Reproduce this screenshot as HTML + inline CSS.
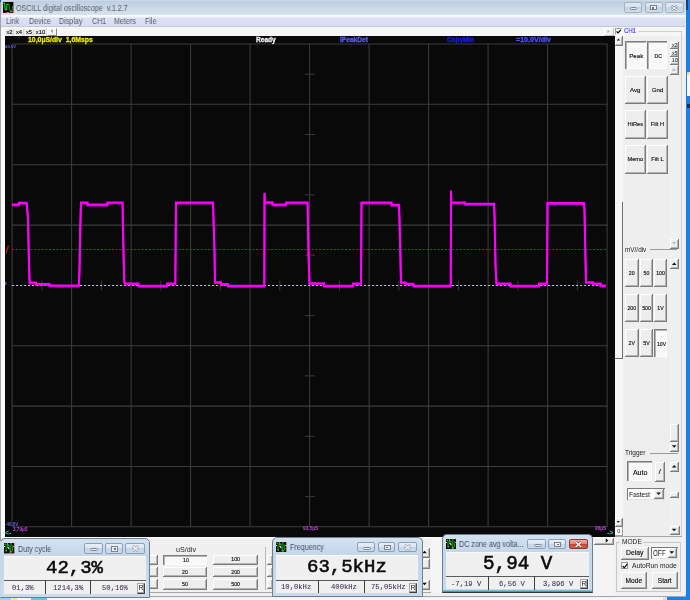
<!DOCTYPE html>
<html><head><meta charset="utf-8"><style>
*{margin:0;padding:0;box-sizing:border-box}
html,body{width:690px;height:600px;overflow:hidden;background:#1c7fe4;position:relative}
div{position:absolute}
.t{white-space:pre;will-change:transform}
.c{white-space:pre;text-align:center;will-change:transform}
</style></head><body>
<div style="left:0px;top:0px;width:686px;height:596px;background:#e4ecf5;border-left:1px solid #9aa4ae;border-bottom:1px solid #a0a4aa;"></div><div style="left:0px;top:596px;width:667px;height:4px;background:#f6f7f8;"></div><div style="left:663px;top:596px;width:4px;height:4px;background:#cfe0f0;"></div><div style="left:0px;top:598px;width:11px;height:2px;background:#8fd8f0;"></div><div style="left:11.5px;top:598px;width:5.5px;height:2px;background:#f0e890;"></div><div style="left:31px;top:598px;width:16px;height:2px;background:#60c8e8;"></div><div style="left:0px;top:0px;width:1px;height:2px;background:#2050a0;"></div><div style="left:687px;top:71.5px;width:3px;height:24px;background:#f6f8fa;"></div><div style="left:687px;top:72px;width:2px;height:3px;background:#f0d070;"></div><div style="left:687px;top:104px;width:3px;height:4px;background:#203048;"></div><div style="left:1px;top:0px;width:685px;height:15px;background:linear-gradient(#d8dfe6 0,#bfcfdf 8%,#c9d8e6 50%,#d6e3ef 100%);"></div><div style="left:1px;top:15px;width:684px;height:12px;background:linear-gradient(#ffffff 0,#f4f6fc 15%,#dde1f2 30%,#d9ddf1 100%);border-bottom:1px solid #c6cad6;"></div><div style="left:1px;top:27px;width:684px;height:569px;background:#f0f0f0;"></div><div style="left:1px;top:27px;width:684px;height:9px;background:#f6f6f6;"></div><div style="left:1px;top:36px;width:4px;height:501px;background:#fafafa;"></div><svg style="position:absolute;left:3px;top:2px" width="10.5" height="11" viewBox="0 0 10.5 11"><rect x="0" y="0" width="10.5" height="11" fill="#5a1010"/><rect x="0" y="0" width="9.8" height="10.2" fill="#020202"/><path d="M0.6 1.4 H1.6 L2.2 7.6 H3.6 L3.9 2.4 H6" stroke="#10e010" stroke-width="1.1" fill="none"/><path d="M6 2.4 L7 9.3 H9 L9.6 4.8" stroke="#089008" stroke-width="1.1" fill="none"/><circle cx="8.3" cy="9.4" r="0.9" fill="#10e010"/><circle cx="2.8" cy="7.6" r="0.8" fill="#10e010"/><circle cx="1.2" cy="1.4" r="0.8" fill="#10e010"/><circle cx="9.6" cy="5" r="0.7" fill="#10c010"/><rect x="3.5" y="10.2" width="2.5" height="0.8" fill="#e070d0"/></svg><div class="t" style="left:16px;top:4.7px;font:normal 8.2px/8.2px 'Liberation Sans',sans-serif;color:#555a6a;transform:scaleX(0.873);transform-origin:0 0">OSCILL digital oscilloscope  v.1.2.7</div><div style="left:623.7px;top:2.3px;width:18.799999999999955px;height:10.3px;background:linear-gradient(#e2eaf3 0,#d6e1ec 45%,#c6d4e3 50%,#cfdbe8 100%);border:1px solid #a4b4c8;border-radius:2px;"></div><div style="left:644.6px;top:2.3px;width:18.299999999999955px;height:10.3px;background:linear-gradient(#e2eaf3 0,#d6e1ec 45%,#c6d4e3 50%,#cfdbe8 100%);border:1px solid #a4b4c8;border-radius:2px;"></div><div style="left:664.5px;top:2.3px;width:19.299999999999955px;height:10.3px;background:linear-gradient(#e2eaf3 0,#d6e1ec 45%,#c6d4e3 50%,#cfdbe8 100%);border:1px solid #a4b4c8;border-radius:2px;"></div><div style="left:629.5px;top:6.8px;width:7.3px;height:3.6px;background:#eef1f4;border:1px solid #7a828e;border-radius:1.5px;"></div><div style="left:649.8px;top:5.2px;width:6.8px;height:5.2px;border:1px solid #7a828e;background:#eef1f4;"></div><div style="left:652.2px;top:7px;width:2px;height:1.5px;background:#6a7280;"></div><svg style="position:absolute;left:670px;top:4.5px" width="8.5" height="6.2" viewBox="0 0 8.5 6.2"><path d="M1.4 0.9 L7.1 5.3 M7.1 0.9 L1.4 5.3" stroke="#7a828e" stroke-width="2.4"/><path d="M1.4 0.9 L7.1 5.3 M7.1 0.9 L1.4 5.3" stroke="#f0f2f4" stroke-width="1.1"/></svg><div style="left:686px;top:0px;width:2px;height:10px;background:#1a3a78;"></div><div class="t" style="left:6px;top:18px;font:normal 8.2px/8.2px 'Liberation Sans',sans-serif;color:#5a5a6a;transform:scaleX(0.87);transform-origin:0 0">Link</div><div class="t" style="left:28.7px;top:18px;font:normal 8.2px/8.2px 'Liberation Sans',sans-serif;color:#5a5a6a;transform:scaleX(0.87);transform-origin:0 0">Device</div><div class="t" style="left:59px;top:18px;font:normal 8.2px/8.2px 'Liberation Sans',sans-serif;color:#5a5a6a;transform:scaleX(0.87);transform-origin:0 0">Display</div><div class="t" style="left:91.5px;top:18px;font:normal 8.2px/8.2px 'Liberation Sans',sans-serif;color:#5a5a6a;transform:scaleX(0.87);transform-origin:0 0">CH1</div><div class="t" style="left:114.2px;top:18px;font:normal 8.2px/8.2px 'Liberation Sans',sans-serif;color:#5a5a6a;transform:scaleX(0.87);transform-origin:0 0">Meters</div><div class="t" style="left:145.2px;top:18px;font:normal 8.2px/8.2px 'Liberation Sans',sans-serif;color:#5a5a6a;transform:scaleX(0.87);transform-origin:0 0">File</div><div style="left:5px;top:27.5px;width:9px;height:8px;background:#ececec;border-right:1px solid #d8d8d8;border-top:1px solid #fafafa;"></div><div class="c" style="left:5px;top:27.8px;width:9px;height:8px;font:normal 5.8px/8px 'Liberation Sans',sans-serif;color:#000;-webkit-text-stroke:0.1px #000">x2</div><div style="left:14px;top:27.5px;width:10px;height:8px;background:#ececec;border-right:1px solid #d8d8d8;border-top:1px solid #fafafa;"></div><div class="c" style="left:14px;top:27.8px;width:10px;height:8px;font:normal 5.8px/8px 'Liberation Sans',sans-serif;color:#000;-webkit-text-stroke:0.1px #000">x4</div><div style="left:24px;top:27.5px;width:10px;height:8px;background:#ececec;border-right:1px solid #d8d8d8;border-top:1px solid #fafafa;"></div><div class="c" style="left:24px;top:27.8px;width:10px;height:8px;font:normal 5.8px/8px 'Liberation Sans',sans-serif;color:#000;-webkit-text-stroke:0.1px #000">x5</div><div style="left:34px;top:27.5px;width:13px;height:8px;background:#ececec;border-right:1px solid #d8d8d8;border-top:1px solid #fafafa;"></div><div class="c" style="left:34px;top:27.8px;width:13px;height:8px;font:normal 5.8px/8px 'Liberation Sans',sans-serif;color:#000;-webkit-text-stroke:0.1px #000">x10</div><div style="left:47px;top:27.5px;width:9.5px;height:8.2px;background:#f4f4f4;border:1px solid #8a8a8a;border-top-color:#fff;border-left-color:#fff;"></div><svg style="position:absolute;left:0;top:0" width="690" height="600"><polygon points="52.75,29.30 52.75,32.90 50.75,31.10" fill="#888"/></svg><div style="left:4.5px;top:36px;width:611px;height:501px;background:#090909;"></div><div style="left:1px;top:537px;width:614px;height:61px;background:#f0f0f0;border-top:1px solid #ffffff;"></div><svg style="position:absolute;left:0;top:0" width="690" height="600" viewBox="0 0 690 600"><line x1="12.1" y1="44" x2="12.1" y2="526.8" stroke="#3c3c3c" stroke-width="1.05"/><line x1="71.6" y1="44" x2="71.6" y2="526.8" stroke="#3c3c3c" stroke-width="1.05"/><line x1="131.1" y1="44" x2="131.1" y2="526.8" stroke="#3c3c3c" stroke-width="1.05"/><line x1="190.6" y1="44" x2="190.6" y2="526.8" stroke="#3c3c3c" stroke-width="1.05"/><line x1="250.1" y1="44" x2="250.1" y2="526.8" stroke="#3c3c3c" stroke-width="1.05"/><line x1="309.6" y1="44" x2="309.6" y2="526.8" stroke="#3c3c3c" stroke-width="1.05"/><line x1="369.1" y1="44" x2="369.1" y2="526.8" stroke="#3c3c3c" stroke-width="1.05"/><line x1="428.6" y1="44" x2="428.6" y2="526.8" stroke="#3c3c3c" stroke-width="1.05"/><line x1="488.1" y1="44" x2="488.1" y2="526.8" stroke="#3c3c3c" stroke-width="1.05"/><line x1="547.6" y1="44" x2="547.6" y2="526.8" stroke="#3c3c3c" stroke-width="1.05"/><line x1="607.1" y1="44" x2="607.1" y2="526.8" stroke="#3c3c3c" stroke-width="1.05"/><line x1="12" y1="44.0" x2="607.5" y2="44.0" stroke="#3c3c3c" stroke-width="1.05"/><line x1="12" y1="104.3" x2="607.5" y2="104.3" stroke="#3c3c3c" stroke-width="1.05"/><line x1="12" y1="164.7" x2="607.5" y2="164.7" stroke="#3c3c3c" stroke-width="1.05"/><line x1="12" y1="225.1" x2="607.5" y2="225.1" stroke="#3c3c3c" stroke-width="1.05"/><line x1="12" y1="345.8" x2="607.5" y2="345.8" stroke="#3c3c3c" stroke-width="1.05"/><line x1="12" y1="406.1" x2="607.5" y2="406.1" stroke="#3c3c3c" stroke-width="1.05"/><line x1="12" y1="466.4" x2="607.5" y2="466.4" stroke="#3c3c3c" stroke-width="1.05"/><line x1="12" y1="526.8" x2="607.5" y2="526.8" stroke="#3c3c3c" stroke-width="1.05"/><line x1="305" y1="74.2" x2="315" y2="74.2" stroke="#3a3a3a" stroke-width="1"/><line x1="305" y1="134.5" x2="315" y2="134.5" stroke="#3a3a3a" stroke-width="1"/><line x1="305" y1="194.9" x2="315" y2="194.9" stroke="#3a3a3a" stroke-width="1"/><line x1="305" y1="255.2" x2="315" y2="255.2" stroke="#3a3a3a" stroke-width="1"/><line x1="305" y1="315.6" x2="315" y2="315.6" stroke="#3a3a3a" stroke-width="1"/><line x1="305" y1="375.9" x2="315" y2="375.9" stroke="#3a3a3a" stroke-width="1"/><line x1="305" y1="436.3" x2="315" y2="436.3" stroke="#3a3a3a" stroke-width="1"/><line x1="305" y1="496.6" x2="315" y2="496.6" stroke="#3a3a3a" stroke-width="1"/><line x1="41.8" y1="280.5" x2="41.8" y2="290.5" stroke="#3a3a3a" stroke-width="1"/><line x1="101.3" y1="280.5" x2="101.3" y2="290.5" stroke="#3a3a3a" stroke-width="1"/><line x1="160.8" y1="280.5" x2="160.8" y2="290.5" stroke="#3a3a3a" stroke-width="1"/><line x1="220.3" y1="280.5" x2="220.3" y2="290.5" stroke="#3a3a3a" stroke-width="1"/><line x1="279.8" y1="280.5" x2="279.8" y2="290.5" stroke="#3a3a3a" stroke-width="1"/><line x1="339.4" y1="280.5" x2="339.4" y2="290.5" stroke="#3a3a3a" stroke-width="1"/><line x1="398.9" y1="280.5" x2="398.9" y2="290.5" stroke="#3a3a3a" stroke-width="1"/><line x1="458.4" y1="280.5" x2="458.4" y2="290.5" stroke="#3a3a3a" stroke-width="1"/><line x1="517.9" y1="280.5" x2="517.9" y2="290.5" stroke="#3a3a3a" stroke-width="1"/><line x1="577.4" y1="280.5" x2="577.4" y2="290.5" stroke="#3a3a3a" stroke-width="1"/><line x1="12" y1="249.5" x2="606" y2="249.5" stroke="#c41212" stroke-width="1.1" stroke-dasharray="2.1 1.6"/><line x1="12" y1="285.5" x2="606" y2="285.5" stroke="#b4bcd8" stroke-width="1.1" stroke-dasharray="2.2 1.8"/><path d="M12,204.5 H19 V202.8 H26.6 L28,218 L28.6,244 L29.2,270 L29.6,282.5 H36 V284 H49.5 V285.6 H78.8 L79.5,270 L80.2,230 L81,202.5 H87.5 V204.6 H107.5 V202.4 H122.6 L123,230 L124.2,281 L125,283.5 H138.5 V285.8 H167 V283.6 H175.3 L176,202.5 H213 L214.5,250 L215,282.2 H221 V284 H228 V285.8 H264.3 L264.5,192.7 L265,202.3 H272.5 V204.6 H286 V202.5 H307.6 L308.4,250 L309.5,283.3 H324 V285.8 H353 V283.6 H361 L361.5,202.5 H391.5 V204.8 H399 L399.5,220 L400.3,250 L401,282.4 H405.5 V283.8 H413.5 V285.8 H450.8 L451,190.4 L451.3,202.5 H465 V203.8 H494 L494.6,217 L495.5,265 L496.5,283.5 H510.5 V285.8 H539 V283.6 H547 L547.5,203 H584 L584.5,210 L585.3,250 L586,282.2 H593 V283.6 H600.5 V285.6 H606" stroke="#ff00ff" stroke-width="2" fill="none" stroke-linejoin="miter" transform="translate(0,0.9)" stroke-opacity="0.75"/><path d="M12,204.5 H19 V202.8 H26.6 L28,218 L28.6,244 L29.2,270 L29.6,282.5 H36 V284 H49.5 V285.6 H78.8 L79.5,270 L80.2,230 L81,202.5 H87.5 V204.6 H107.5 V202.4 H122.6 L123,230 L124.2,281 L125,283.5 H138.5 V285.8 H167 V283.6 H175.3 L176,202.5 H213 L214.5,250 L215,282.2 H221 V284 H228 V285.8 H264.3 L264.5,192.7 L265,202.3 H272.5 V204.6 H286 V202.5 H307.6 L308.4,250 L309.5,283.3 H324 V285.8 H353 V283.6 H361 L361.5,202.5 H391.5 V204.8 H399 L399.5,220 L400.3,250 L401,282.4 H405.5 V283.8 H413.5 V285.8 H450.8 L451,190.4 L451.3,202.5 H465 V203.8 H494 L494.6,217 L495.5,265 L496.5,283.5 H510.5 V285.8 H539 V283.6 H547 L547.5,203 H584 L584.5,210 L585.3,250 L586,282.2 H593 V283.6 H600.5 V285.6 H606" stroke="#ff00ff" stroke-width="2" fill="none" stroke-linejoin="miter"/><line x1="6" y1="253.5" x2="8.5" y2="245.5" stroke="#c01818" stroke-width="1.2"/><rect x="5" y="282" width="1.5" height="3" fill="#5050c0"/></svg><div class="t" style="left:27.5px;top:37px;font:bold 6.9px/6.9px 'Liberation Sans',sans-serif;color:#e8e800;-webkit-text-stroke:0.3px currentColor">10,0µS/div  1,6Msps</div><div class="t" style="left:256px;top:37.2px;font:bold 6.6px/6.6px 'Liberation Sans',sans-serif;color:#f0f0f8;-webkit-text-stroke:0.3px currentColor">Ready</div><div class="t" style="left:340px;top:37.2px;font:bold 6.6px/6.6px 'Liberation Sans',sans-serif;color:#5a5aff;-webkit-text-stroke:0.3px currentColor">iPeakDet</div><div class="t" style="left:447px;top:37px;font:bold 6.4px/6.4px 'Liberation Sans',sans-serif;color:#1a1aff;-webkit-text-stroke:0.3px currentColor">CopyMin</div><div class="t" style="left:516.4px;top:37px;font:bold 7.1px/7.1px 'Liberation Sans',sans-serif;color:#5050ff;-webkit-text-stroke:0.3px currentColor">=10.0V/div</div><div class="t" style="left:5px;top:44.8px;font:bold 4.3px/4.3px 'Liberation Sans',sans-serif;color:#6060e0;">40,0V</div><div class="t" style="left:5px;top:522.5px;font:bold 4.5px/4.5px 'Liberation Sans',sans-serif;color:#6060e0;">-40,0V</div><div class="t" style="left:13px;top:527.5px;font:bold 4.6px/4.6px 'Liberation Sans',sans-serif;color:#c040e0;">3,79µS</div><div class="t" style="left:4.8px;top:529.2px;font:bold 7px/7px 'Liberation Sans',sans-serif;color:#40c0c8;">&lt;-</div><div class="t" style="left:302.8px;top:526.5px;font:bold 4.8px/4.8px 'Liberation Sans',sans-serif;color:#c040e0;">93,5µS</div><div class="t" style="left:594.8px;top:526.5px;font:bold 4.8px/4.8px 'Liberation Sans',sans-serif;color:#c040e0;">96µS</div><div class="t" style="left:606.5px;top:529.2px;font:bold 7px/7px 'Liberation Sans',sans-serif;color:#40c0c8;">-&gt;</div><div style="left:604px;top:28px;width:10px;height:8px;background:#f4f4f4;border:1px solid #c0c0c0;border-top-color:#fff;border-left-color:#fff;"></div><svg style="position:absolute;left:0;top:0" width="690" height="600"><polygon points="607.50,29.70 607.50,33.30 609.50,31.50" fill="#aaa"/></svg><div style="left:615.3px;top:27.9px;width:6.4px;height:6.4px;background:#fafafa;border-left:1px solid #a0a0a0;border-top:1px solid #a0a0a0;"></div><svg style="position:absolute;left:616.2px;top:28.6px" width="5.5" height="5" viewBox="0 0 5.5 5"><path d="M0.6 2.4 L2 3.9 L4.9 0.8" stroke="#000" stroke-width="1.2" fill="none"/></svg><div class="t" style="left:624.3px;top:27.2px;font:normal 7.7px/7.7px 'Liberation Sans',sans-serif;color:#2a2aff;transform:scaleX(0.78);transform-origin:0 0;-webkit-text-stroke:0.12px #2a2aff">CH1</div><div style="left:638px;top:31px;width:44px;height:1px;background:#d0d0d0;"></div><div style="left:681px;top:31px;width:1px;height:506px;background:#d0d0d0;"></div><div style="left:615px;top:36px;width:8px;height:501px;background:#f6f6f6;"></div><div style="left:615px;top:36px;width:7.5px;height:9.5px;background:#eeeeee;box-shadow:inset -1px -1px #7c7c7c,inset 1px 1px #ffffff,inset -2px -2px #b4b4b4;"></div><svg style="position:absolute;left:0;top:0" width="690" height="600"><polygon points="616.70,40.60 620.10,40.60 618.40,38.80" fill="#111"/></svg><div style="left:622px;top:202px;width:1px;height:157px;background:#707070;"></div><div style="left:615px;top:358px;width:8px;height:1px;background:#707070;"></div><div style="left:615px;top:517.8px;width:7.5px;height:9.2px;background:#eeeeee;box-shadow:inset -1px -1px #7c7c7c,inset 1px 1px #ffffff,inset -2px -2px #b4b4b4;"></div><svg style="position:absolute;left:0;top:0" width="690" height="600"><polygon points="616.55,521.00 619.95,521.00 618.25,522.80" fill="#111"/></svg><div style="left:615px;top:536px;width:67px;height:1px;background:#a8a8a8;"></div><div style="left:615px;top:527px;width:7.5px;height:8.5px;background:#fafafa;box-shadow:inset -1px -1px #a0a0a0;"></div><div class="c" style="left:615px;top:527px;width:7.5px;height:8.5px;font:normal 5.5px/8.5px 'Liberation Sans',sans-serif;color:#222;">0</div><div style="left:624px;top:36px;width:46px;height:500px;background:#eeeeee;"></div><div style="left:625px;top:41px;width:20.5px;height:27.6px;background:#f8f8f8;box-shadow:inset 1px 1px #7c7c7c,inset 2px 2px #b4b4b4,inset -1px -1px #ffffff;"></div><div class="c" style="left:626px;top:42px;width:20.5px;height:27.6px;font:normal 6.1px/27.6px 'Liberation Sans',sans-serif;color:#111;-webkit-text-stroke:0.15px #111">Peak</div><div style="left:646.6px;top:41px;width:20.3px;height:27.6px;background:#f8f8f8;box-shadow:inset 1px 1px #7c7c7c,inset 2px 2px #b4b4b4,inset -1px -1px #ffffff;"></div><div class="c" style="left:647.6px;top:42.8px;width:20.3px;height:27.6px;font:normal 5.2px/27.6px 'Liberation Sans',sans-serif;color:#111;-webkit-text-stroke:0.15px #111">DC</div><div style="left:625px;top:75.6px;width:20.6px;height:28.6px;background:#eeeeee;box-shadow:inset -1px -1px #7c7c7c,inset 1px 1px #ffffff,inset -2px -2px #b4b4b4;"></div><div class="c" style="left:625px;top:75.6px;width:20.6px;height:28.6px;font:normal 6.1px/28.6px 'Liberation Sans',sans-serif;color:#111;-webkit-text-stroke:0.15px #111">Avg</div><div style="left:647px;top:75.6px;width:21px;height:28.6px;background:#eeeeee;box-shadow:inset -1px -1px #7c7c7c,inset 1px 1px #ffffff,inset -2px -2px #b4b4b4;"></div><div class="c" style="left:647px;top:75.6px;width:21px;height:28.6px;font:normal 6.1px/28.6px 'Liberation Sans',sans-serif;color:#111;-webkit-text-stroke:0.15px #111">Gnd</div><div style="left:625px;top:110.3px;width:20.6px;height:28.5px;background:#eeeeee;box-shadow:inset -1px -1px #7c7c7c,inset 1px 1px #ffffff,inset -2px -2px #b4b4b4;"></div><div class="c" style="left:625px;top:110.3px;width:20.6px;height:28.5px;font:normal 5.7px/28.5px 'Liberation Sans',sans-serif;color:#111;-webkit-text-stroke:0.15px #111">HiRes</div><div style="left:647px;top:110.3px;width:21px;height:28.5px;background:#eeeeee;box-shadow:inset -1px -1px #7c7c7c,inset 1px 1px #ffffff,inset -2px -2px #b4b4b4;"></div><div class="c" style="left:647px;top:110.3px;width:21px;height:28.5px;font:normal 5.7px/28.5px 'Liberation Sans',sans-serif;color:#111;-webkit-text-stroke:0.15px #111">Filt H</div><div style="left:625px;top:145.3px;width:20.6px;height:28.5px;background:#eeeeee;box-shadow:inset -1px -1px #7c7c7c,inset 1px 1px #ffffff,inset -2px -2px #b4b4b4;"></div><div class="c" style="left:625px;top:145.3px;width:20.6px;height:28.5px;font:normal 5.7px/28.5px 'Liberation Sans',sans-serif;color:#111;-webkit-text-stroke:0.15px #111">Memo</div><div style="left:647px;top:145.3px;width:21px;height:28.5px;background:#eeeeee;box-shadow:inset -1px -1px #7c7c7c,inset 1px 1px #ffffff,inset -2px -2px #b4b4b4;"></div><div class="c" style="left:647px;top:145.3px;width:21px;height:28.5px;font:normal 5.7px/28.5px 'Liberation Sans',sans-serif;color:#111;-webkit-text-stroke:0.15px #111">Filt L</div><div style="left:669.6px;top:41.75px;width:9.4px;height:7.0px;background:#eeeeee;box-shadow:inset -1px -1px #7c7c7c,inset 1px 1px #ffffff,inset -2px -2px #b4b4b4;"></div><div class="c" style="left:669.6px;top:41.75px;width:9.4px;height:7.0px;font:normal 5.2px/7.0px 'Liberation Sans',sans-serif;color:#111;">x2</div><div style="left:669.6px;top:49px;width:9.4px;height:8px;background:#eeeeee;box-shadow:inset -1px -1px #7c7c7c,inset 1px 1px #ffffff,inset -2px -2px #b4b4b4;"></div><div class="c" style="left:669.6px;top:49px;width:9.4px;height:8px;font:normal 5.2px/8px 'Liberation Sans',sans-serif;color:#111;">x5</div><div style="left:669.6px;top:57px;width:9.4px;height:7.5px;background:#eeeeee;box-shadow:inset -1px -1px #7c7c7c,inset 1px 1px #ffffff,inset -2px -2px #b4b4b4;"></div><div class="c" style="left:669.6px;top:57px;width:9.4px;height:7.5px;font:normal 5.2px/7.5px 'Liberation Sans',sans-serif;color:#111;">10</div><div style="left:669.6px;top:65px;width:9.4px;height:9.8px;background:#eeeeee;box-shadow:inset -1px -1px #7c7c7c,inset 1px 1px #ffffff,inset -2px -2px #b4b4b4;"></div><svg style="position:absolute;left:0;top:0" width="690" height="600"><polygon points="671.50,70.65 676.10,70.65 673.80,68.15" fill="#bbb"/></svg><div style="left:670px;top:238.75px;width:9.4px;height:9.75px;background:#eeeeee;box-shadow:inset -1px -1px #7c7c7c,inset 1px 1px #ffffff,inset -2px -2px #b4b4b4;"></div><svg style="position:absolute;left:0;top:0" width="690" height="600"><polygon points="671.90,241.88 676.50,241.88 674.20,244.38" fill="#bbb"/></svg><div style="left:670px;top:259px;width:9.4px;height:10.4px;background:#eeeeee;box-shadow:inset -1px -1px #7c7c7c,inset 1px 1px #ffffff,inset -2px -2px #b4b4b4;"></div><svg style="position:absolute;left:0;top:0" width="690" height="600"><polygon points="671.90,264.95 676.50,264.95 674.20,262.45" fill="#111"/></svg><div class="t" style="left:625px;top:247.2px;font:normal 6.4px/6.4px 'Liberation Sans',sans-serif;color:#222;">mV//div</div><div style="left:650px;top:249px;width:27px;height:1px;background:#9a9a9a;"></div><div style="left:625px;top:259px;width:13.5px;height:28px;background:#eeeeee;box-shadow:inset -1px -1px #7c7c7c,inset 1px 1px #ffffff,inset -2px -2px #b4b4b4;"></div><div class="c" style="left:625px;top:259px;width:13.5px;height:28px;font:normal 5.2px/28px 'Liberation Sans',sans-serif;color:#111;-webkit-text-stroke:0.15px #111">20</div><div style="left:639.5px;top:259px;width:13px;height:28px;background:#eeeeee;box-shadow:inset -1px -1px #7c7c7c,inset 1px 1px #ffffff,inset -2px -2px #b4b4b4;"></div><div class="c" style="left:639.5px;top:259px;width:13px;height:28px;font:normal 5.2px/28px 'Liberation Sans',sans-serif;color:#111;-webkit-text-stroke:0.15px #111">50</div><div style="left:654px;top:259px;width:13px;height:28px;background:#eeeeee;box-shadow:inset -1px -1px #7c7c7c,inset 1px 1px #ffffff,inset -2px -2px #b4b4b4;"></div><div class="c" style="left:654px;top:259px;width:13px;height:28px;font:normal 5.2px/28px 'Liberation Sans',sans-serif;color:#111;-webkit-text-stroke:0.15px #111">100</div><div style="left:625px;top:293.75px;width:13.5px;height:28.25px;background:#eeeeee;box-shadow:inset -1px -1px #7c7c7c,inset 1px 1px #ffffff,inset -2px -2px #b4b4b4;"></div><div class="c" style="left:625px;top:293.75px;width:13.5px;height:28.25px;font:normal 5.2px/28.25px 'Liberation Sans',sans-serif;color:#111;-webkit-text-stroke:0.15px #111">200</div><div style="left:639.5px;top:293.75px;width:13px;height:28.25px;background:#eeeeee;box-shadow:inset -1px -1px #7c7c7c,inset 1px 1px #ffffff,inset -2px -2px #b4b4b4;"></div><div class="c" style="left:639.5px;top:293.75px;width:13px;height:28.25px;font:normal 5.2px/28.25px 'Liberation Sans',sans-serif;color:#111;-webkit-text-stroke:0.15px #111">500</div><div style="left:654px;top:293.75px;width:13px;height:28.25px;background:#eeeeee;box-shadow:inset -1px -1px #7c7c7c,inset 1px 1px #ffffff,inset -2px -2px #b4b4b4;"></div><div class="c" style="left:654px;top:293.75px;width:13px;height:28.25px;font:normal 5.2px/28.25px 'Liberation Sans',sans-serif;color:#111;-webkit-text-stroke:0.15px #111">1V</div><div style="left:625px;top:328.75px;width:13.5px;height:28.2px;background:#eeeeee;box-shadow:inset -1px -1px #7c7c7c,inset 1px 1px #ffffff,inset -2px -2px #b4b4b4;"></div><div class="c" style="left:625px;top:328.75px;width:13.5px;height:28.2px;font:normal 5.2px/28.2px 'Liberation Sans',sans-serif;color:#111;-webkit-text-stroke:0.15px #111">2V</div><div style="left:639.5px;top:328.75px;width:13px;height:28.2px;background:#eeeeee;box-shadow:inset -1px -1px #7c7c7c,inset 1px 1px #ffffff,inset -2px -2px #b4b4b4;"></div><div class="c" style="left:639.5px;top:328.75px;width:13px;height:28.2px;font:normal 5.2px/28.2px 'Liberation Sans',sans-serif;color:#111;-webkit-text-stroke:0.15px #111">5V</div><div style="left:654px;top:328.75px;width:13px;height:28.2px;background:#f8f8f8;box-shadow:inset 1px 1px #7c7c7c,inset 2px 2px #b4b4b4,inset -1px -1px #ffffff;"></div><div class="c" style="left:655px;top:329.75px;width:13px;height:28.2px;font:normal 5.2px/28.2px 'Liberation Sans',sans-serif;color:#111;-webkit-text-stroke:0.15px #111">10V</div><div style="left:670px;top:423.75px;width:9.4px;height:18.5px;background:#eeeeee;box-shadow:inset -1px -1px #7c7c7c,inset 1px 1px #ffffff,inset -2px -2px #b4b4b4;"></div><div style="left:670px;top:442px;width:9.4px;height:10px;background:#eeeeee;box-shadow:inset -1px -1px #7c7c7c,inset 1px 1px #ffffff,inset -2px -2px #b4b4b4;"></div><svg style="position:absolute;left:0;top:0" width="690" height="600"><polygon points="671.90,445.25 676.50,445.25 674.20,447.75" fill="#111"/></svg><div class="t" style="left:625.2px;top:449.8px;font:normal 6.5px/6.5px 'Liberation Sans',sans-serif;color:#222;">Trigger</div><div style="left:650px;top:453px;width:28px;height:1px;background:#9a9a9a;"></div><div style="left:627.3px;top:461.2px;width:24.4px;height:20px;background:#f8f8f8;box-shadow:inset 1px 1px #7c7c7c,inset 2px 2px #b4b4b4,inset -1px -1px #ffffff;"></div><div class="c" style="left:628.3px;top:463.2px;width:24.4px;height:20px;font:normal 7.1px/20px 'Liberation Sans',sans-serif;color:#111;-webkit-text-stroke:0.15px #111">Auto</div><div style="left:655px;top:461.5px;width:9.8px;height:20.2px;background:#eeeeee;box-shadow:inset -1px -1px #7c7c7c,inset 1px 1px #ffffff,inset -2px -2px #b4b4b4;"></div><div class="c" style="left:655px;top:461.5px;width:9.8px;height:20.2px;font:normal 7.5px/20.2px 'Liberation Sans',sans-serif;color:#111;-webkit-text-stroke:0.15px #111">/</div><div style="left:670px;top:462px;width:9.4px;height:9.7px;background:#eeeeee;box-shadow:inset -1px -1px #7c7c7c,inset 1px 1px #ffffff,inset -2px -2px #b4b4b4;"></div><svg style="position:absolute;left:0;top:0" width="690" height="600"><polygon points="671.90,467.60 676.50,467.60 674.20,465.10" fill="#111"/></svg><div style="left:627.3px;top:488.2px;width:38px;height:12px;background:#fff;box-shadow:inset 1px 1px #7a7a7a,inset -1px -1px #e0e0e0;"></div><div class="t" style="left:629.3px;top:491.2px;font:normal 7px/7px 'Liberation Sans',sans-serif;color:#111;transform:scaleX(0.92);transform-origin:0 0">Fastest</div><div style="left:654px;top:489.2px;width:10.2px;height:10px;background:#eeeeee;box-shadow:inset -1px -1px #7c7c7c,inset 1px 1px #ffffff,inset -2px -2px #b4b4b4;"></div><svg style="position:absolute;left:0;top:0" width="690" height="600"><polygon points="656.30,492.45 660.90,492.45 658.60,494.95" fill="#111"/></svg><div style="left:670px;top:492px;width:9.4px;height:6px;background:#eeeeee;box-shadow:inset -1px -1px #7c7c7c,inset 1px 1px #ffffff,inset -2px -2px #b4b4b4;"></div><div style="left:669.75px;top:525.6px;width:9.75px;height:9.8px;background:#eeeeee;box-shadow:inset -1px -1px #7c7c7c,inset 1px 1px #ffffff,inset -2px -2px #b4b4b4;"></div><svg style="position:absolute;left:0;top:0" width="690" height="600"><polygon points="671.83,528.75 676.42,528.75 674.12,531.25" fill="#111"/></svg><div style="left:592px;top:537px;width:22px;height:60px;background:#f4f4f4;"></div><div style="left:594px;top:537.5px;width:19.5px;height:7.5px;background:#eeeeee;box-shadow:inset -1px -1px #7c7c7c,inset 1px 1px #ffffff,inset -2px -2px #b4b4b4;"></div><svg style="position:absolute;left:0;top:0" width="690" height="600"><polygon points="605.75,538.25 605.75,542.85 608.25,540.55" fill="#111"/></svg><div style="left:616.4px;top:542px;width:65px;height:49.5px;border:1px solid #c8c8c8;"></div><div style="left:620px;top:537.5px;width:23px;height:7px;background:#f0f0f0;"></div><div class="t" style="left:621.6px;top:538.5px;font:normal 6.6px/6.6px 'Liberation Sans',sans-serif;color:#222;">MODE</div><div style="left:621.4px;top:547.2px;width:27.4px;height:12.8px;background:#eeeeee;box-shadow:inset -1px -1px #7c7c7c,inset 1px 1px #ffffff,inset -2px -2px #b4b4b4;"></div><div class="c" style="left:621.4px;top:547.2px;width:27.4px;height:12.8px;font:normal 6.8px/12.8px 'Liberation Sans',sans-serif;color:#111;-webkit-text-stroke:0.15px #111">Delay</div><div style="left:651.2px;top:547.2px;width:26.6px;height:11.6px;background:#fff;box-shadow:inset 1px 1px #7a7a7a,inset -1px -1px #e0e0e0;"></div><div class="t" style="left:653.3px;top:549.4px;font:normal 7.4px/7.4px 'Liberation Sans',sans-serif;color:#111;transform:scale(0.86,1.12);transform-origin:0 0">OFF</div><div style="left:667.5px;top:548.2px;width:9.5px;height:9.6px;background:#eeeeee;box-shadow:inset -1px -1px #7c7c7c,inset 1px 1px #ffffff,inset -2px -2px #b4b4b4;"></div><svg style="position:absolute;left:0;top:0" width="690" height="600"><polygon points="669.45,551.25 674.05,551.25 671.75,553.75" fill="#111"/></svg><div style="left:621.4px;top:562.2px;width:7px;height:7px;background:#fafafa;border:1px solid #999;"></div><svg style="position:absolute;left:622px;top:563px" width="6" height="6" viewBox="0 0 6 6"><path d="M0.6 3 L2.2 4.8 L5.4 0.8" stroke="#111" stroke-width="1.2" fill="none"/></svg><div class="t" style="left:632px;top:562.5px;font:normal 6.7px/6.7px 'Liberation Sans',sans-serif;color:#222;">AutoRun mode</div><div style="left:621.4px;top:572.1px;width:25.7px;height:17.4px;background:#eeeeee;box-shadow:inset -1px -1px #7c7c7c,inset 1px 1px #ffffff,inset -2px -2px #b4b4b4;"></div><div class="c" style="left:621.4px;top:572.1px;width:25.7px;height:17.4px;font:normal 6.6px/17.4px 'Liberation Sans',sans-serif;color:#111;-webkit-text-stroke:0.15px #111">Mode</div><div style="left:652.3px;top:572.1px;width:25.5px;height:17.4px;background:#eeeeee;box-shadow:inset -1px -1px #7c7c7c,inset 1px 1px #ffffff,inset -2px -2px #b4b4b4;"></div><div class="c" style="left:652.3px;top:572.1px;width:25.5px;height:17.4px;font:normal 6.6px/17.4px 'Liberation Sans',sans-serif;color:#111;-webkit-text-stroke:0.15px #111">Start</div><div class="t" style="left:176px;top:546px;font:normal 7.2px/7.2px 'Liberation Sans',sans-serif;color:#222;">uS/div</div><div style="left:163.3px;top:554.8px;width:43.8px;height:9.8px;background:#f8f8f8;box-shadow:inset 1px 1px #7c7c7c,inset 2px 2px #b4b4b4,inset -1px -1px #ffffff;"></div><div class="c" style="left:164.3px;top:555.8px;width:43.8px;height:9.8px;font:normal 5.2px/9.8px 'Liberation Sans',sans-serif;color:#111;-webkit-text-stroke:0.15px #111">10</div><div style="left:212.8px;top:554.8px;width:45.2px;height:9.8px;background:#eeeeee;box-shadow:inset -1px -1px #7c7c7c,inset 1px 1px #ffffff,inset -2px -2px #b4b4b4;"></div><div class="c" style="left:212.8px;top:554.8px;width:45.2px;height:9.8px;font:normal 5.2px/9.8px 'Liberation Sans',sans-serif;color:#111;-webkit-text-stroke:0.15px #111">100</div><div style="left:163.3px;top:567px;width:43.8px;height:10.4px;background:#eeeeee;box-shadow:inset -1px -1px #7c7c7c,inset 1px 1px #ffffff,inset -2px -2px #b4b4b4;"></div><div class="c" style="left:163.3px;top:567px;width:43.8px;height:10.4px;font:normal 5.2px/10.4px 'Liberation Sans',sans-serif;color:#111;-webkit-text-stroke:0.15px #111">20</div><div style="left:212.8px;top:567px;width:45.2px;height:10.4px;background:#eeeeee;box-shadow:inset -1px -1px #7c7c7c,inset 1px 1px #ffffff,inset -2px -2px #b4b4b4;"></div><div class="c" style="left:212.8px;top:567px;width:45.2px;height:10.4px;font:normal 5.2px/10.4px 'Liberation Sans',sans-serif;color:#111;-webkit-text-stroke:0.15px #111">200</div><div style="left:163.3px;top:579.3px;width:43.8px;height:10.3px;background:#eeeeee;box-shadow:inset -1px -1px #7c7c7c,inset 1px 1px #ffffff,inset -2px -2px #b4b4b4;"></div><div class="c" style="left:163.3px;top:579.3px;width:43.8px;height:10.3px;font:normal 5.2px/10.3px 'Liberation Sans',sans-serif;color:#111;-webkit-text-stroke:0.15px #111">50</div><div style="left:212.8px;top:579.3px;width:45.2px;height:10.3px;background:#eeeeee;box-shadow:inset -1px -1px #7c7c7c,inset 1px 1px #ffffff,inset -2px -2px #b4b4b4;"></div><div class="c" style="left:212.8px;top:579.3px;width:45.2px;height:10.3px;font:normal 5.2px/10.3px 'Liberation Sans',sans-serif;color:#111;-webkit-text-stroke:0.15px #111">500</div><div style="left:140px;top:554.8px;width:18px;height:10px;background:#eeeeee;box-shadow:inset -1px -1px #7c7c7c,inset 1px 1px #ffffff,inset -2px -2px #b4b4b4;"></div><div style="left:140px;top:567px;width:18px;height:10px;background:#eeeeee;box-shadow:inset -1px -1px #7c7c7c,inset 1px 1px #ffffff,inset -2px -2px #b4b4b4;"></div><div style="left:140px;top:579.3px;width:18px;height:10px;background:#eeeeee;box-shadow:inset -1px -1px #7c7c7c,inset 1px 1px #ffffff,inset -2px -2px #b4b4b4;"></div><div style="left:265px;top:547px;width:1px;height:43px;background:#b8b8b8;"></div><div style="left:266.5px;top:554.8px;width:6px;height:10px;background:#eeeeee;box-shadow:inset -1px -1px #7c7c7c,inset 1px 1px #ffffff,inset -2px -2px #b4b4b4;"></div><div style="left:266.5px;top:567px;width:6px;height:10px;background:#eeeeee;box-shadow:inset -1px -1px #7c7c7c,inset 1px 1px #ffffff,inset -2px -2px #b4b4b4;"></div><div style="left:266.5px;top:579.3px;width:6px;height:10px;background:#eeeeee;box-shadow:inset -1px -1px #7c7c7c,inset 1px 1px #ffffff,inset -2px -2px #b4b4b4;"></div><div style="left:140px;top:591.5px;width:302px;height:1px;background:#a8a8a8;"></div><div style="left:1px;top:595.5px;width:685px;height:1px;background:#a4a8ae;"></div><div style="left:416px;top:547.5px;width:14px;height:10px;background:#eeeeee;box-shadow:inset -1px -1px #7c7c7c,inset 1px 1px #ffffff,inset -2px -2px #b4b4b4;"></div><svg style="position:absolute;left:0;top:0" width="690" height="600"><polygon points="422.20,553.25 426.80,553.25 424.50,550.75" fill="#111"/></svg><div style="left:416px;top:559px;width:14px;height:9.5px;background:#eeeeee;box-shadow:inset -1px -1px #7c7c7c,inset 1px 1px #ffffff,inset -2px -2px #b4b4b4;"></div><div style="left:416px;top:579.6px;width:14px;height:10px;background:#eeeeee;box-shadow:inset -1px -1px #7c7c7c,inset 1px 1px #ffffff,inset -2px -2px #b4b4b4;"></div><svg style="position:absolute;left:0;top:0" width="690" height="600"><polygon points="422.20,582.85 426.80,582.85 424.50,585.35" fill="#111"/></svg><div style="left:430.5px;top:537px;width:11px;height:56px;background:#f5f5f5;"></div><div style="left:0px;top:537.8px;width:150.2px;height:60.0px;background:linear-gradient(#d4e2f0,#c4d6ea 30%,#cadbec);border:1px solid #6e7e90;border-radius:5px 5px 0 0;"></div><svg style="position:absolute;left:4.2px;top:543.0px" width="10.4" height="10.6" viewBox="0 0 10 10"><rect width="10" height="10" fill="#6a1a1a"/><rect x="0" y="0" width="9.4" height="9.4" fill="#050805"/><rect x="0.4" y="0.5" width="1.8" height="1.2" fill="#20d020"/><rect x="1.2" y="2.2" width="1.5" height="6" fill="#107a10"/><rect x="2.6" y="1.2" width="2.4" height="1.6" fill="#20a020"/><path d="M3.4 3.4 L5.2 5.8" stroke="#e8e8e8" stroke-width="1.1"/><path d="M5.8 1.6 L6.2 8.6 M7.6 2 L8.2 8" stroke="#108a10" stroke-width="1.4"/><circle cx="6.6" cy="8.4" r="1" fill="#20e020"/><circle cx="2.2" cy="7.4" r="0.8" fill="#20d020"/><rect x="3" y="0.3" width="0.9" height="0.9" fill="#fff"/><rect x="6.2" y="0.3" width="0.9" height="0.9" fill="#fff"/><rect x="0" y="2.8" width="0.9" height="0.9" fill="#fff"/><rect x="9" y="2.8" width="1" height="0.9" fill="#fff"/><rect x="4.5" y="9.3" width="2" height="0.7" fill="#e070d0"/></svg><div class="t" style="left:17.5px;top:545.5999999999999px;font:normal 8.2px/8.2px 'Liberation Sans',sans-serif;color:#454e66;transform:scaleX(0.875);transform-origin:0 0">Duty cycle</div><div style="left:83.99999999999999px;top:543.4px;width:18.800000000000004px;height:10.3px;background:linear-gradient(#e8f0f8 0,#dae6f2 45%,#c4d4e6 50%,#cddcec 100%);border:1px solid #8ca0b8;border-radius:2px;"></div><div style="left:104.99999999999999px;top:543.4px;width:17.800000000000004px;height:10.3px;background:linear-gradient(#e8f0f8 0,#dae6f2 45%,#c4d4e6 50%,#cddcec 100%);border:1px solid #8ca0b8;border-radius:2px;"></div><div style="left:125.19999999999999px;top:543.4px;width:19.5px;height:10.3px;background:linear-gradient(#e8f0f8 0,#dae6f2 45%,#c4d4e6 50%,#cddcec 100%);border:1px solid #8ca0b8;border-radius:2px;"></div><div style="left:90.19999999999999px;top:548.0999999999999px;width:8px;height:3px;background:#eef1f4;border:1px solid #7a828e;border-radius:1.5px;"></div><div style="left:110.99999999999999px;top:546.0px;width:7px;height:5.5px;background:#eef1f4;border:1px solid #7a828e;"></div><div style="left:113.49999999999999px;top:548.0px;width:2px;height:1.5px;background:#6a7280;"></div><svg style="position:absolute;left:130.7px;top:545.3px" width="9" height="7" viewBox="0 0 9 7"><path d="M1.7 0.9 L7.3 6.1 M7.3 0.9 L1.7 6.1" stroke="#7a828e" stroke-width="2.6" stroke-opacity="0.8"/><path d="M1.7 0.9 L7.3 6.1 M7.3 0.9 L1.7 6.1" stroke="#f4f6f8" stroke-width="1.4"/></svg><div style="left:3.8px;top:555.8px;width:141.89999999999998px;height:38.0px;background:#f0f0f0;"></div><div style="left:3.8px;top:555.8px;width:141.89999999999998px;height:1px;background:#fafafa;"></div><div class="t" style="left:45.5px;top:558.8px;font:normal 19px/19px 'Liberation Mono',sans-serif;color:#0a0a0a;-webkit-text-stroke:0.55px #0a0a0a">42,3%</div><div style="left:3.8px;top:580.3px;width:141.89999999999998px;height:1.2px;background:#5a5a5a;"></div><div class="t" style="left:12px;top:585.0999999999999px;font:normal 7.2px/7.2px 'Liberation Mono',sans-serif;color:#3a2a50;-webkit-text-stroke:0.05px #3a2a50">01,3%</div><div style="left:44.6px;top:580.3px;width:1.1px;height:13.5px;background:#404040;"></div><div class="t" style="left:53px;top:585.0999999999999px;font:normal 7.2px/7.2px 'Liberation Mono',sans-serif;color:#3a2a50;-webkit-text-stroke:0.05px #3a2a50">1214,3%</div><div style="left:89.9px;top:580.3px;width:1.1px;height:13.5px;background:#404040;"></div><div class="t" style="left:102px;top:585.0999999999999px;font:normal 7.2px/7.2px 'Liberation Mono',sans-serif;color:#3a2a50;-webkit-text-stroke:0.05px #3a2a50">50,16%</div><div style="left:136.7px;top:583.3px;width:8px;height:10.3px;background:#f6f6f6;border:1px solid #404040;border-top-color:#a8a8a8;border-left-color:#a8a8a8;box-shadow:inset -1px -1px #a0a0a0;"></div><div class="c" style="left:136.7px;top:583.3px;width:8px;height:10.3px;font:normal 7px/10.3px 'Liberation Sans',sans-serif;color:#222;">R</div><div style="left:0px;top:541px;width:1px;height:56px;background:#c6d6e8;"></div><div style="left:272.2px;top:536.5px;width:150.60000000000002px;height:60.5px;background:linear-gradient(#d4e2f0,#c4d6ea 30%,#cadbec);border:1px solid #6e7e90;border-radius:5px 5px 0 0;"></div><svg style="position:absolute;left:276.4px;top:541.7px" width="10.4" height="10.6" viewBox="0 0 10 10"><rect width="10" height="10" fill="#6a1a1a"/><rect x="0" y="0" width="9.4" height="9.4" fill="#050805"/><rect x="0.4" y="0.5" width="1.8" height="1.2" fill="#20d020"/><rect x="1.2" y="2.2" width="1.5" height="6" fill="#107a10"/><rect x="2.6" y="1.2" width="2.4" height="1.6" fill="#20a020"/><path d="M3.4 3.4 L5.2 5.8" stroke="#e8e8e8" stroke-width="1.1"/><path d="M5.8 1.6 L6.2 8.6 M7.6 2 L8.2 8" stroke="#108a10" stroke-width="1.4"/><circle cx="6.6" cy="8.4" r="1" fill="#20e020"/><circle cx="2.2" cy="7.4" r="0.8" fill="#20d020"/><rect x="3" y="0.3" width="0.9" height="0.9" fill="#fff"/><rect x="6.2" y="0.3" width="0.9" height="0.9" fill="#fff"/><rect x="0" y="2.8" width="0.9" height="0.9" fill="#fff"/><rect x="9" y="2.8" width="1" height="0.9" fill="#fff"/><rect x="4.5" y="9.3" width="2" height="0.7" fill="#e070d0"/></svg><div class="t" style="left:289.7px;top:544.3px;font:normal 8.2px/8.2px 'Liberation Sans',sans-serif;color:#454e66;transform:scaleX(0.875);transform-origin:0 0">Frequency</div><div style="left:356.6px;top:542.1px;width:18.800000000000004px;height:10.3px;background:linear-gradient(#e8f0f8 0,#dae6f2 45%,#c4d4e6 50%,#cddcec 100%);border:1px solid #8ca0b8;border-radius:2px;"></div><div style="left:377.6px;top:542.1px;width:17.800000000000004px;height:10.3px;background:linear-gradient(#e8f0f8 0,#dae6f2 45%,#c4d4e6 50%,#cddcec 100%);border:1px solid #8ca0b8;border-radius:2px;"></div><div style="left:397.8px;top:542.1px;width:19.5px;height:10.3px;background:linear-gradient(#e8f0f8 0,#dae6f2 45%,#c4d4e6 50%,#cddcec 100%);border:1px solid #8ca0b8;border-radius:2px;"></div><div style="left:362.8px;top:546.8px;width:8px;height:3px;background:#eef1f4;border:1px solid #7a828e;border-radius:1.5px;"></div><div style="left:383.6px;top:544.7px;width:7px;height:5.5px;background:#eef1f4;border:1px solid #7a828e;"></div><div style="left:386.1px;top:546.7px;width:2px;height:1.5px;background:#6a7280;"></div><svg style="position:absolute;left:403.3px;top:544.0px" width="9" height="7" viewBox="0 0 9 7"><path d="M1.7 0.9 L7.3 6.1 M7.3 0.9 L1.7 6.1" stroke="#7a828e" stroke-width="2.6" stroke-opacity="0.8"/><path d="M1.7 0.9 L7.3 6.1 M7.3 0.9 L1.7 6.1" stroke="#f4f6f8" stroke-width="1.4"/></svg><div style="left:276.0px;top:554.5px;width:142.3px;height:38.5px;background:#f0f0f0;"></div><div style="left:276.0px;top:554.5px;width:142.3px;height:1px;background:#fafafa;"></div><div class="t" style="left:307px;top:557.5px;font:normal 19px/19px 'Liberation Mono',sans-serif;color:#0a0a0a;-webkit-text-stroke:0.55px #0a0a0a">63,5kHz</div><div style="left:276.0px;top:579.5px;width:142.3px;height:1.2px;background:#5a5a5a;"></div><div class="t" style="left:281.3px;top:584.3px;font:normal 7.2px/7.2px 'Liberation Mono',sans-serif;color:#3a2a50;-webkit-text-stroke:0.05px #3a2a50">10,0kHz</div><div style="left:318.2px;top:579.5px;width:1.1px;height:13.5px;background:#404040;"></div><div class="t" style="left:331px;top:584.3px;font:normal 7.2px/7.2px 'Liberation Mono',sans-serif;color:#3a2a50;-webkit-text-stroke:0.05px #3a2a50">400kHz</div><div style="left:363.5px;top:579.5px;width:1.1px;height:13.5px;background:#404040;"></div><div class="t" style="left:370.8px;top:584.3px;font:normal 7.2px/7.2px 'Liberation Mono',sans-serif;color:#3a2a50;-webkit-text-stroke:0.05px #3a2a50">75,05kHz</div><div style="left:409.3px;top:582.5px;width:8px;height:10.3px;background:#f6f6f6;border:1px solid #404040;border-top-color:#a8a8a8;border-left-color:#a8a8a8;box-shadow:inset -1px -1px #a0a0a0;"></div><div class="c" style="left:409.3px;top:582.5px;width:8px;height:10.3px;font:normal 7px/10.3px 'Liberation Sans',sans-serif;color:#222;">R</div><div style="left:441.9px;top:533.6px;width:151.60000000000002px;height:59.89999999999998px;background:linear-gradient(#d4e2f0,#c4d6ea 30%,#cadbec);border:1px solid #6e7e90;border-radius:5px 5px 0 0;border-bottom:1px solid #303840;box-shadow:inset 0 -1.5px #3aa0b0;"></div><svg style="position:absolute;left:446.09999999999997px;top:538.8000000000001px" width="10.4" height="10.6" viewBox="0 0 10 10"><rect width="10" height="10" fill="#6a1a1a"/><rect x="0" y="0" width="9.4" height="9.4" fill="#050805"/><rect x="0.4" y="0.5" width="1.8" height="1.2" fill="#20d020"/><rect x="1.2" y="2.2" width="1.5" height="6" fill="#107a10"/><rect x="2.6" y="1.2" width="2.4" height="1.6" fill="#20a020"/><path d="M3.4 3.4 L5.2 5.8" stroke="#e8e8e8" stroke-width="1.1"/><path d="M5.8 1.6 L6.2 8.6 M7.6 2 L8.2 8" stroke="#108a10" stroke-width="1.4"/><circle cx="6.6" cy="8.4" r="1" fill="#20e020"/><circle cx="2.2" cy="7.4" r="0.8" fill="#20d020"/><rect x="3" y="0.3" width="0.9" height="0.9" fill="#fff"/><rect x="6.2" y="0.3" width="0.9" height="0.9" fill="#fff"/><rect x="0" y="2.8" width="0.9" height="0.9" fill="#fff"/><rect x="9" y="2.8" width="1" height="0.9" fill="#fff"/><rect x="4.5" y="9.3" width="2" height="0.7" fill="#e070d0"/></svg><div class="t" style="left:459.4px;top:541.4px;font:normal 8.2px/8.2px 'Liberation Sans',sans-serif;color:#454e66;transform:scaleX(0.875);transform-origin:0 0">DC zone avg volta...</div><div style="left:527.3px;top:539.2px;width:18.800000000000004px;height:10.3px;background:linear-gradient(#e8f0f8 0,#dae6f2 45%,#c4d4e6 50%,#cddcec 100%);border:1px solid #8ca0b8;border-radius:2px;"></div><div style="left:548.3px;top:539.2px;width:17.800000000000004px;height:10.3px;background:linear-gradient(#e8f0f8 0,#dae6f2 45%,#c4d4e6 50%,#cddcec 100%);border:1px solid #8ca0b8;border-radius:2px;"></div><div style="left:568.5px;top:539.2px;width:19.5px;height:10.3px;background:linear-gradient(#eab0a4 0,#e08a7a 45%,#c84530 50%,#d2604c 100%);border:1px solid #8a3a30;border-radius:2px;"></div><div style="left:533.5px;top:543.9px;width:8px;height:3px;background:#eef1f4;border:1px solid #7a828e;border-radius:1.5px;"></div><div style="left:554.3px;top:541.8000000000001px;width:7px;height:5.5px;background:#eef1f4;border:1px solid #7a828e;"></div><div style="left:556.8px;top:543.8000000000001px;width:2px;height:1.5px;background:#6a7280;"></div><svg style="position:absolute;left:574.0px;top:541.1px" width="9" height="7" viewBox="0 0 9 7"><path d="M1.7 0.9 L7.3 6.1 M7.3 0.9 L1.7 6.1" stroke="#7a2a20" stroke-width="2.6" stroke-opacity="0.8"/><path d="M1.7 0.9 L7.3 6.1 M7.3 0.9 L1.7 6.1" stroke="#ffffff" stroke-width="1.4"/></svg><div style="left:445.7px;top:551.6px;width:143.3px;height:37.89999999999998px;background:#f0f0f0;"></div><div style="left:445.7px;top:551.6px;width:143.3px;height:1px;background:#fafafa;"></div><div class="t" style="left:483px;top:554.6px;font:normal 19.3px/19.3px 'Liberation Mono',sans-serif;color:#0a0a0a;-webkit-text-stroke:0.55px #0a0a0a">5,94 V</div><div style="left:445.7px;top:576.0px;width:143.3px;height:1.2px;background:#5a5a5a;"></div><div class="t" style="left:451.3px;top:580.8px;font:normal 7.2px/7.2px 'Liberation Mono',sans-serif;color:#3a2a50;-webkit-text-stroke:0.05px #3a2a50">-7,19 V</div><div style="left:488.4px;top:576.0px;width:1.1px;height:13.5px;background:#404040;"></div><div class="t" style="left:499px;top:580.8px;font:normal 7.2px/7.2px 'Liberation Mono',sans-serif;color:#3a2a50;-webkit-text-stroke:0.05px #3a2a50">6,56 V</div><div style="left:533.6px;top:576.0px;width:1.1px;height:13.5px;background:#404040;"></div><div class="t" style="left:542.75px;top:580.8px;font:normal 7.2px/7.2px 'Liberation Mono',sans-serif;color:#3a2a50;-webkit-text-stroke:0.05px #3a2a50">3,896 V</div><div style="left:580.0px;top:579.0px;width:8px;height:10.3px;background:#f6f6f6;border:1px solid #404040;border-top-color:#a8a8a8;border-left-color:#a8a8a8;box-shadow:inset -1px -1px #a0a0a0;"></div><div class="c" style="left:580.0px;top:579.0px;width:8px;height:10.3px;font:normal 7px/10.3px 'Liberation Sans',sans-serif;color:#222;">R</div>
</body></html>
